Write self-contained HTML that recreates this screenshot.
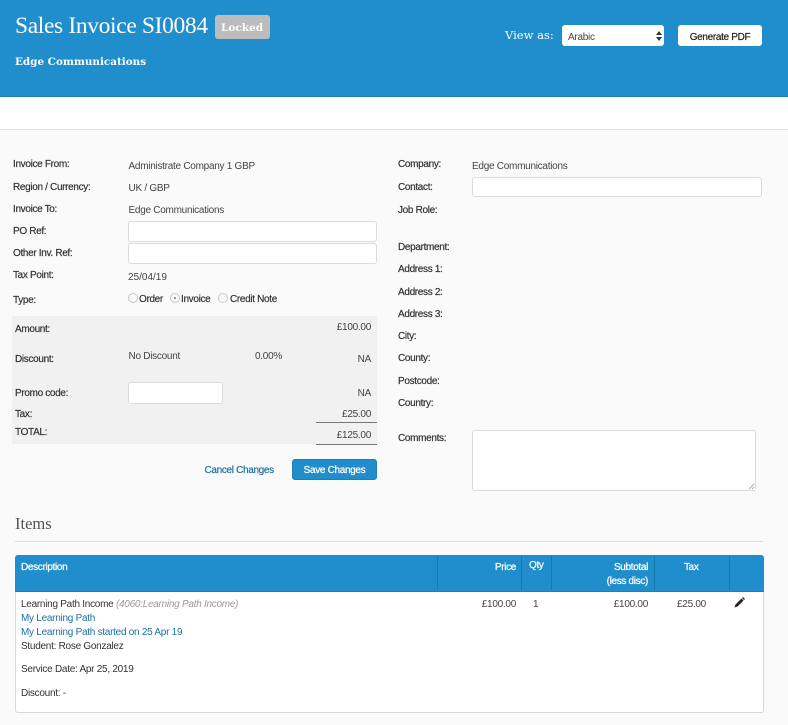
<!DOCTYPE html>
<html><head><meta charset="utf-8"><style>
html,body{margin:0;padding:0}
body{width:788px;height:725px;background:#fafafa;position:relative;overflow:hidden;font-family:"Liberation Sans",sans-serif;font-size:10px;letter-spacing:-.27px;color:#444}
#p{position:absolute;left:0;top:0;width:788px;height:725px;filter:blur(.3px)}
.t{position:absolute;white-space:nowrap;line-height:14px;transform:translateY(2px)}
.l{color:#333;-webkit-text-stroke:.2px #333;letter-spacing:-.33px}
.r{text-align:right}
.b{position:absolute;box-sizing:border-box}
.i{position:absolute;box-sizing:border-box;background:#fff;border:1px solid #dcdcdc;border-radius:3px}
.s{font-family:"DejaVu Serif","Liberation Serif",serif;letter-spacing:0}
.w{color:#fff;-webkit-text-stroke:.25px #fff;letter-spacing:-.33px}
.d{position:absolute;top:556px;height:34px;width:1px;background:#1b78ad}
.a{color:#1f6fa3}
.rd{position:absolute;box-sizing:border-box;width:10px;height:10px;border:1px solid #c8c8c8;border-radius:50%;background:#fafafa;top:293px}
</style></head><body><div id="p">
<div class="b" style="left:0;top:0;width:788px;height:97px;background:#208dcc;border-bottom:1px solid #1c80ba"></div>
<div class="b" style="left:0;top:97px;width:788px;height:33px;background:#fff;border-bottom:1px solid #ddd"></div>
<div class="t" style="left:15px;top:9px;line-height:30px;font-family:'Liberation Serif',serif;font-size:23.5px;letter-spacing:-.35px;color:#fff">Sales Invoice SI0084</div>
<div class="b" style="left:215px;top:15px;width:55px;height:24px;background:#bcbcbc;border-radius:3px"></div>
<div class="t s" style="left:221px;top:19px;font-size:10.5px;font-weight:bold;color:#fff">Locked</div>
<div class="t s" style="left:15px;top:53px;font-size:10.4px;font-weight:bold;color:#fff">Edge Communications</div>
<div class="t s" style="left:505px;top:26px;font-size:11.5px;color:#fff">View as:</div>
<div class="b" style="left:562px;top:25px;width:102px;height:21px;background:#fff;border-radius:3px"></div>
<div class="t" style="left:568px;top:29px;color:#444">Arabic</div>
<svg class="b" style="left:656px;top:31px" width="6" height="10"><path d="M0 4L3 0L6 4ZM0 6L3 10L6 6Z" fill="#333"/></svg>
<div class="b" style="left:678px;top:25px;width:84px;height:21px;background:#fff;border-radius:3px"></div>
<div class="t" style="left:678px;width:84px;text-align:center;top:29px;color:#222;-webkit-text-stroke:.2px #222;letter-spacing:-.33px">Generate PDF</div>

<div class="t l" style="left:13px;top:156px">Invoice From:</div>
<div class="t" style="left:128.5px;top:158px">Administrate Company 1 GBP</div>
<div class="t l" style="left:13px;top:179px">Region / Currency:</div>
<div class="t" style="left:128.5px;top:180px">UK / GBP</div>
<div class="t l" style="left:13px;top:201px">Invoice To:</div>
<div class="t" style="left:128.5px;top:202px">Edge Communications</div>
<div class="t l" style="left:13px;top:223px">PO Ref:</div>
<div class="i" style="left:128px;top:221px;width:249px;height:21px"></div>
<div class="t l" style="left:13px;top:245px">Other Inv. Ref:</div>
<div class="i" style="left:128px;top:243px;width:249px;height:21px"></div>
<div class="t l" style="left:13px;top:267px">Tax Point:</div>
<div class="t" style="left:128px;top:269px;letter-spacing:0">25/04/19</div>
<div class="t l" style="left:13px;top:292px">Type:</div>
<div class="rd" style="left:128px"></div>
<div class="t l" style="left:139px;top:291px">Order</div>
<div class="rd" style="left:170px"></div>
<div class="b" style="left:174px;top:297px;width:2px;height:2px;background:#777;border-radius:50%"></div>
<div class="t l" style="left:181px;top:291px">Invoice</div>
<div class="rd" style="left:218px"></div>
<div class="t l" style="left:230px;top:291px">Credit Note</div>

<div class="b" style="left:12px;top:316px;width:365px;height:128px;background:#f1f1f1"></div>
<div class="t l" style="left:15px;top:321px">Amount:</div>
<div class="t r" style="right:417px;top:319px">£100.00</div>
<div class="t l" style="left:15px;top:351px">Discount:</div>
<div class="t" style="left:128.5px;top:348px">No Discount</div>
<div class="t" style="left:255px;top:348px">0.00%</div>
<div class="t r" style="right:417px;top:351px">NA</div>
<div class="t l" style="left:15px;top:385px">Promo code:</div>
<div class="i" style="left:128px;top:382px;width:95px;height:22px"></div>
<div class="t r" style="right:417px;top:385px">NA</div>
<div class="t l" style="left:15px;top:406px">Tax:</div>
<div class="t r" style="right:417px;top:406px">£25.00</div>
<div class="b" style="left:316px;top:422px;width:61px;height:1px;background:#777"></div>
<div class="t l" style="left:15px;top:424px">TOTAL:</div>
<div class="t r" style="right:417px;top:427px">£125.00</div>
<div class="b" style="left:316px;top:444px;width:61px;height:1px;background:#777"></div>
<div class="t a" style="left:204.5px;top:462px;-webkit-text-stroke:.2px #1f6fa3;letter-spacing:-.33px">Cancel Changes</div>
<div class="b" style="left:292px;top:459px;width:85px;height:21px;background:#208dcc;border-radius:3px;border:1px solid #1c80ba"></div>
<div class="t w" style="left:292px;width:85px;text-align:center;top:462px">Save Changes</div>

<div class="t l" style="left:398px;top:156px">Company:</div>
<div class="t" style="left:472px;top:158px">Edge Communications</div>
<div class="t l" style="left:398px;top:179px">Contact:</div>
<div class="i" style="left:472px;top:177px;width:290px;height:20px"></div>
<div class="t l" style="left:398px;top:202px">Job Role:</div>
<div class="t l" style="left:398px;top:239px">Department:</div>
<div class="t l" style="left:398px;top:261px">Address 1:</div>
<div class="t l" style="left:398px;top:284px">Address 2:</div>
<div class="t l" style="left:398px;top:306px">Address 3:</div>
<div class="t l" style="left:398px;top:328px">City:</div>
<div class="t l" style="left:398px;top:350px">County:</div>
<div class="t l" style="left:398px;top:373px">Postcode:</div>
<div class="t l" style="left:398px;top:395px">Country:</div>
<div class="t l" style="left:398px;top:430px">Comments:</div>
<div class="i" style="left:472px;top:430px;width:284px;height:61px"></div>
<svg class="b" style="left:748px;top:483px" width="7" height="7"><path d="M1 6L6 1M4 6L6 4" stroke="#999" stroke-width=".8" fill="none"/></svg>

<div class="t" style="left:15px;top:512px;line-height:20px;font-family:'Liberation Serif',serif;font-size:16.5px;letter-spacing:0;color:#555">Items</div>
<div class="b" style="left:15px;top:541px;width:748px;height:1px;background:#ddd"></div>
<div class="b" style="left:15px;top:555px;width:749px;height:158px;background:#fff;border:1px solid #d8d8d8;border-radius:3px"></div>
<div class="b" style="left:15px;top:555px;width:749px;height:37px;background:#208dcc;border-radius:3px 3px 0 0;border-bottom:1px solid #1c80ba"></div>
<div class="d" style="left:437px"></div><div class="d" style="left:521px"></div><div class="d" style="left:551px"></div><div class="d" style="left:654px"></div><div class="d" style="left:729px"></div>
<div class="t w" style="left:21px;top:559px">Description</div>
<div class="t w r" style="right:272px;top:559px">Price</div>
<div class="t w" style="left:529px;top:557px">Qty</div>
<div class="t w r" style="right:140px;top:559px">Subtotal</div>
<div class="t w r" style="right:140px;top:573px">(less disc)</div>
<div class="t w" style="left:684px;top:559px">Tax</div>

<div class="t" style="left:21px;top:596px;color:#333">Learning Path Income <i style="color:#999">(4060:Learning Path Income)</i></div>
<div class="t a" style="left:21px;top:610px">My Learning Path</div>
<div class="t a" style="left:21px;top:624px">My Learning Path started on 25 Apr 19</div>
<div class="t" style="left:21px;top:638px;color:#333">Student: Rose Gonzalez</div>
<div class="t" style="left:21px;top:661px;color:#333">Service Date: Apr 25, 2019</div>
<div class="t" style="left:21px;top:685px;color:#333">Discount: -</div>
<div class="t r" style="right:272px;top:596px">£100.00</div>
<div class="t" style="left:533px;top:596px">1</div>
<div class="t r" style="right:140px;top:596px">£100.00</div>
<div class="t" style="left:677px;top:596px">£25.00</div>
<svg class="b" style="left:734px;top:597px" width="11" height="11" viewBox="0 0 11 11"><path d="M0.5 10.5L1.5 7.5L7.5 1.5L9.5 3.5L3.5 9.5Z M8 1L9 0L11 2L10 3Z" fill="#222"/></svg>
</div></body></html>
